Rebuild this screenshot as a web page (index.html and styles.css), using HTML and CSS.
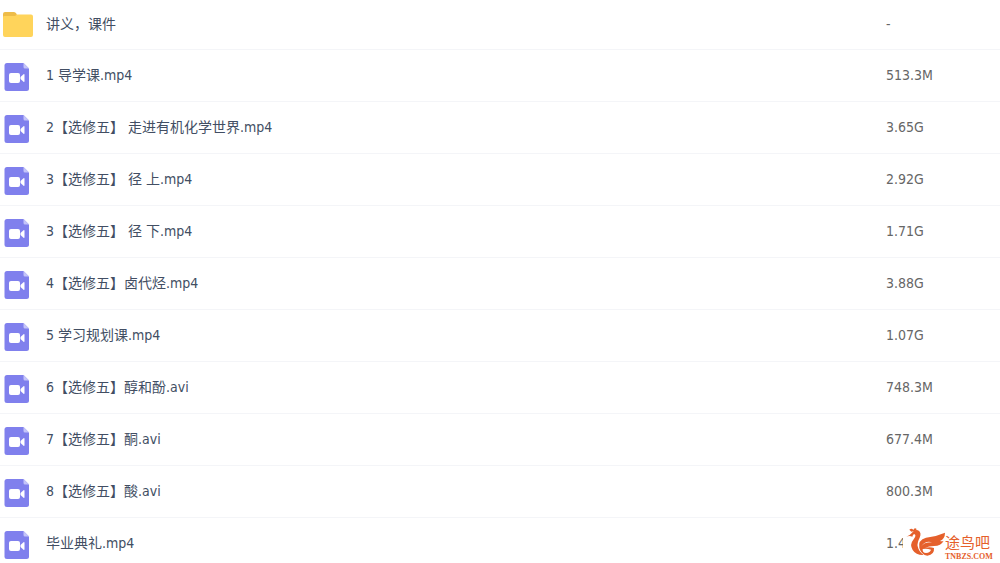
FILE: index.html
```html
<!DOCTYPE html>
<html lang="zh-CN">
<head>
<meta charset="utf-8">
<meta name="viewport" content="width=device-width, initial-scale=1">
<title>文件列表</title>
<link rel="stylesheet" href="styles.css">
</head>
<body>
<svg class="defs" aria-hidden="true">
  <symbol id="video" viewBox="0 0 26 28">
    <path fill="#8080ed" d="M3 0H19.500L25 5.500V25.500Q25 28 22.500 28H3Q.5 28 .5 25.500V2.500Q.5 0 3 0Z"/>
    <path fill="#c4c4f9" d="M19.500 0L25 5.500H21Q19.500 5.500 19.500 4Z"/>
    <rect x="5" y="10" width="11" height="10" rx="2" fill="#fff"/>
    <path fill="#fff" d="M16.500 14L19.500 11.300Q20.500 10.700 20.500 12V18Q20.500 19.300 19.500 18.700L16.500 16Z"/>
  </symbol>
</svg>
<main class="files">
  <table class="list">
    <tbody>
      <tr><td class="icon"><svg class="folder" viewBox="0 0 30 25" aria-hidden="true"><path fill="#eebc48" d="M2 0H11Q12.500 0 13.300 1.500L14 3H28V8H0V2Q0 0 2 0Z"/><path fill="#ffd45b" d="M0 5Q0 4 1.500 4H12L14 2.500H28Q30 2.500 30 4.500V23Q30 25 28 25H2Q0 25 0 23Z"/></svg></td><td class="name">讲义，课件</td><td class="size">-</td></tr>
      <tr><td class="icon"><svg class="video"><use href="#video"/></svg></td><td class="name">1 导学课.mp4</td><td class="size">513.3M</td></tr>
      <tr><td class="icon"><svg class="video"><use href="#video"/></svg></td><td class="name">2【选修五】 走进有机化学世界.mp4</td><td class="size">3.65G</td></tr>
      <tr><td class="icon"><svg class="video"><use href="#video"/></svg></td><td class="name">3【选修五】 径 上.mp4</td><td class="size">2.92G</td></tr>
      <tr><td class="icon"><svg class="video"><use href="#video"/></svg></td><td class="name">3【选修五】 径 下.mp4</td><td class="size">1.71G</td></tr>
      <tr><td class="icon"><svg class="video"><use href="#video"/></svg></td><td class="name">4【选修五】卤代烃.mp4</td><td class="size">3.88G</td></tr>
      <tr><td class="icon"><svg class="video"><use href="#video"/></svg></td><td class="name">5 学习规划课.mp4</td><td class="size">1.07G</td></tr>
      <tr><td class="icon"><svg class="video"><use href="#video"/></svg></td><td class="name">6【选修五】醇和酚.avi</td><td class="size">748.3M</td></tr>
      <tr><td class="icon"><svg class="video"><use href="#video"/></svg></td><td class="name">7【选修五】酮.avi</td><td class="size">677.4M</td></tr>
      <tr><td class="icon"><svg class="video"><use href="#video"/></svg></td><td class="name">8【选修五】酸.avi</td><td class="size">800.3M</td></tr>
      <tr><td class="icon"><svg class="video"><use href="#video"/></svg></td><td class="name">毕业典礼.mp4</td><td class="size">1.4</td></tr>
    </tbody>
  </table>
  <div class="brand">
    <svg class="bird" viewBox="18 12 117 84" aria-hidden="true">
      <g fill="#e5602b">
        <path d="M19 38Q30 34 36 26Q43 15 54 19Q66 26 59 41Q51 56 53 67Q56 83 71 93Q48 94 38 78Q28 61 40 47Q50 35 44 31Q39 29 37 38Q28 34 19 38Z"/>
        <path d="M28 17Q35 11 40 18Q43 10 50 15L47 20L34 23Z"/>
        <path d="M58 72Q53 48 78 41Q108 38 135 26Q135 44 120 51Q126 53 131 50Q123 66 102 66Q86 66 75 72Q89 67 102 72Q104 92 82 95Q64 93 58 72ZM68 75Q67 87 78 87Q91 86 93 77Q80 72 68 75ZM63 68Q72 54 97 55Q76 48 63 68Z" fill-rule="evenodd"/>
      </g>
    </svg>
    <div class="words"><span class="title">途鸟吧</span><span class="site">TNBZS.COM</span></div>
  </div>
</main>
</body>
</html>
```
FILE: styles.css
```css
* { box-sizing: border-box; }
body {
  margin: 0;
  background: #fff;
  font: 14px/20px "DejaVu Sans Condensed", "Noto Sans CJK SC", sans-serif;
}
.defs { position: absolute; width: 0; height: 0; }
.files { position: relative; height: 100vh; overflow: hidden; }
.list { width: 100%; border-collapse: separate; border-spacing: 0; table-layout: fixed; }
.list td { height: 52px; padding: 0 0 2px; border-bottom: 1px solid #f4f5f8; vertical-align: middle; }
.list tr:first-child td { height: 50px; }
.list .icon { width: 46px; padding: 2px 0 0 4px; }
.list tr:first-child .icon { padding: 0 0 0 3px; }
.icon svg { display: block; }
.video { width: 26px; height: 28px; }
.folder { width: 30px; height: 25px; }
.name { color: #424e63; }
.list .size { width: 114px; color: #666; }
.brand {
  position: absolute;
  right: 0;
  bottom: 0;
  display: flex;
  width: 97px;
  height: 38px;
  padding: 3px 0 0 3px;
  background: #fff;
  color: #e5602b;
}
.bird { width: 39px; height: 28px; }
.words { display: flex; flex-direction: column; gap: 4px; padding-top: 6px; }
.title { font: 15px/15px "Noto Sans CJK SC", sans-serif; }
.site { font: bold 8px/8px "Liberation Serif", serif; }
```
